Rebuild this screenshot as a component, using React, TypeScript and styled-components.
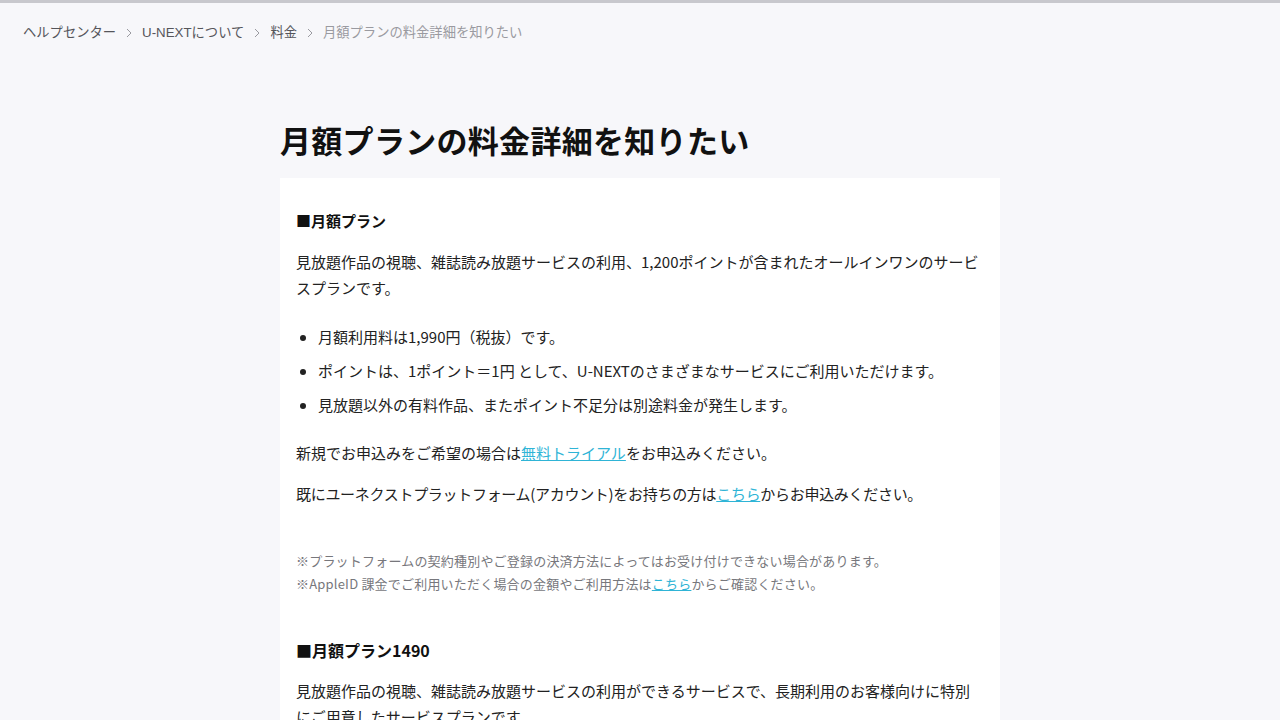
import React from "react";
import styled, { createGlobalStyle } from "styled-components";

const GlobalStyle = createGlobalStyle`
  html, body {
    margin: 0;
    padding: 0;
    background: #f7f7fa;
    font-family: "Noto Sans CJK JP", "Noto Sans", sans-serif;
    color: #1a1a1a;
  }
`;

type Crumb = {
  label: string;
  current?: boolean;
};

const crumbs: Crumb[] = [
  { label: "ヘルプセンター" },
  { label: "U-NEXTについて" },
  { label: "料金" },
  { label: "月額プランの料金詳細を知りたい", current: true },
];

const Chevron = () => (
  <svg width="8" height="10" viewBox="0 0 8 10" fill="none">
    <path d="M2 1l4 4-4 4" stroke="#9a9aa0" strokeWidth="1" />
  </svg>
);

const App = () => {
  return (
    <Page>
      <GlobalStyle />
      <TopBar />
      <Breadcrumbs>
        {crumbs.map((c, i) => (
          <React.Fragment key={c.label}>
            {i > 0 && <Sep><Chevron /></Sep>}
            <CrumbItem $current={c.current}>{c.label}</CrumbItem>
          </React.Fragment>
        ))}
      </Breadcrumbs>
      <Main>
        <Title>月額プランの料金詳細を知りたい</Title>
        <Card>
          <SectionTitle>■月額プラン</SectionTitle>
          <Para>
            見放題作品の視聴、雑誌読み放題サービスの利用、1,200ポイントが含まれたオールインワンのサービスプランです。
          </Para>
          <List>
            <li>月額利用料は1,990円（税抜）です。</li>
            <li>ポイントは、1ポイント＝1円 として、U-NEXTのさまざまなサービスにご利用いただけます。</li>
            <li>見放題以外の有料作品、またポイント不足分は別途料金が発生します。</li>
          </List>
          <Para>
            新規でお申込みをご希望の場合は<Link href="#">無料トライアル</Link>をお申込みください。
          </Para>
          <Para $tight>
            既にユーネクストプラットフォーム(アカウント)をお持ちの方は<Link href="#">こちら</Link>からお申込みください。
          </Para>
          <Notes>
            <div>※プラットフォームの契約種別やご登録の決済方法によってはお受け付けできない場合があります。</div>
            <div>
              ※AppleID 課金でご利用いただく場合の金額やご利用方法は<Link href="#">こちら</Link>からご確認ください。
            </div>
          </Notes>
          <SectionTitle $large>■月額プラン1490</SectionTitle>
          <Para>
            見放題作品の視聴、雑誌読み放題サービスの利用ができるサービスで、長期利用のお客様向けに特別にご用意したサービスプランです。
          </Para>
        </Card>
      </Main>
    </Page>
  );
};

export default App;

const Page = styled.div`
  min-height: 100vh;
  background: #f7f7fa;
`;

const TopBar = styled.div`
  height: 3px;
  background: #c8c8cd;
`;

const Breadcrumbs = styled.nav`
  display: flex;
  align-items: center;
  gap: 9px;
  padding: 20px 0 0 23px;
  height: 20px;
  font-family: "Liberation Sans", "Noto Sans CJK JP", sans-serif;
  font-size: 13.3px;
  line-height: 20px;
`;

const CrumbItem = styled.span<{ $current?: boolean }>`
  color: ${(p) => (p.$current ? "#9a9aa0" : "#55555a")};
`;

const Sep = styled.span`
  display: flex;
  align-items: center;
`;

const Main = styled.main`
  width: 720px;
  margin: 0 auto;
  padding-top: 77px;
`;

const Title = styled.h1`
  margin: 0;
  font-size: 31px;
  font-weight: 700;
  line-height: 40px;
  color: #111;
  letter-spacing: 0.3px;
`;

const Card = styled.section`
  margin-top: 18px;
  background: #fff;
  padding: 32px 16px 0;
  height: 600px;
  box-sizing: border-box;
`;

const SectionTitle = styled.h3<{ $large?: boolean }>`
  margin: ${(p) => (p.$large ? "44px" : "0")} 0 17px;
  font-size: ${(p) => (p.$large ? "16px" : "15px")};
  font-weight: 700;
  line-height: 22px;
  color: #111;
`;

const Para = styled.p<{ $tight?: boolean }>`
  margin: 15px 0 0;
  font-size: 15px;
  line-height: 26px;
  color: #222;
  letter-spacing: ${(p) => (p.$tight ? "-0.3px" : "0")};
`;

const List = styled.ul`
  margin: 23px 0 22px;
  padding-left: 22px;
  font-size: 15px;
  line-height: 26px;
  color: #222;

  li + li {
    margin-top: 8px;
  }
`;

const Link = styled.a`
  color: #2fb4d6;
  text-decoration: underline;
`;

const Notes = styled.div`
  margin-top: 42px;
  font-size: 13px;
  line-height: 23px;
  color: #77777c;
  letter-spacing: 0.2px;
`;
